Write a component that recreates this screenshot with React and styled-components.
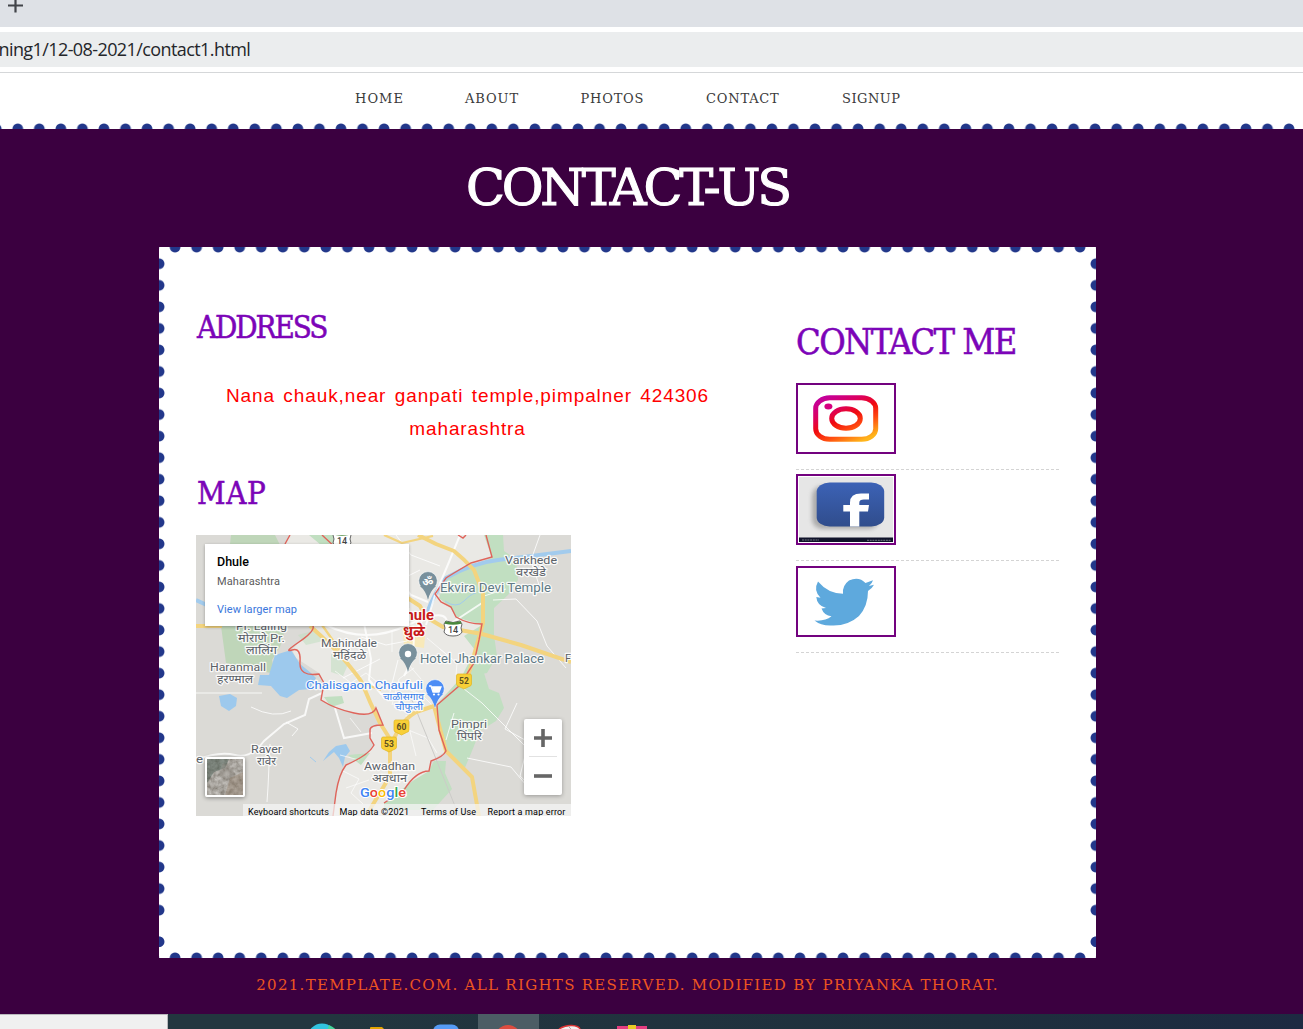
import React from 'react';
import styled, { createGlobalStyle } from 'styled-components';

const SLAB = `'DejaVu Serif', serif`;
const SLAB_NARROW = `'DejaVu Serif Condensed', 'DejaVu Serif', serif`;
const PLUM = '#3b0040';
const DOT = '#22378a';

const GlobalStyle = createGlobalStyle`
  * { box-sizing: border-box; }
  body { margin: 0; background: ${PLUM}; overflow: hidden; }
  h1, h2, p, ul { margin: 0; padding: 0; font-weight: 400; }
  ul { list-style: none; }
  a { color: inherit; text-decoration: none; }
  svg { display: block; }
`;

const Screen = styled.div`
  width: 1303px;
  height: 1029px;
  display: flex;
  flex-direction: column;
  overflow: hidden;
  background: ${PLUM};
`;

const TabStrip = styled.div`
  height: 27px;
  flex: none;
  padding-left: 8px;
  background: #dee1e6;
`;

const AddressRow = styled.div`
  height: 46px;
  flex: none;
  padding: 5px 0;
  background: #fff;
  border-bottom: 1px solid #d5d7d9;
`;

const AddressBar = styled.div`
  height: 35px;
  overflow: hidden;
  background: #ebedee;
  color: #24262a;
  font: 18px/35px 'Open Sans', sans-serif;
  letter-spacing: -0.59px;
  text-indent: -1.5px;
  white-space: nowrap;
`;

const Nav = styled.nav`
  height: 56px;
  flex: none;
  display: flex;
  flex-direction: column;
  justify-content: space-between;
  padding-top: 16px;
  background: #fff;
`;

const NavList = styled.ul`
  display: grid;
  grid-template-columns: 110px 115.5px 125.5px 136px auto;
  padding-left: 355px;
`;

const NavItem = styled.li`
  font: 13px/20px ${SLAB};
  letter-spacing: ${(p) => p.$spacing}px;
  color: #3a3a3a;
  white-space: nowrap;
`;

const DotRow = styled.div`
  height: 6px;
  background: radial-gradient(ellipse 5.8px 5.9px at 50% ${(p) => (p.$edge === 'top' ? '0' : '100%')}, ${DOT} 84%, transparent 100%)
    ${(p) => p.$offset}px 0 / 21.56px 6px repeat-x;
  grid-column: 1 / -1;
`;

const DotColumn = styled.div`
  padding-top: 0.3px;
  --dot: radial-gradient(ellipse 5.9px 5.8px at ${(p) => (p.$edge === 'left' ? '0' : '100%')} 50%, ${DOT} 84%, transparent 100%);

  &::before,
  &::after {
    content: '';
    display: block;
    background: var(--dot) 0 0 / 6px 21.56px repeat-y;
  }
  &::before { height: 668.4px; }
  &::after { height: 21.56px; margin-top: 9.2px; }
`;

const Banner = styled.header`
  height: 118px;
  flex: none;
  padding: 29px 48px 0 0;
`;

const Title = styled.h1`
  font: 51px/60px ${SLAB};
  letter-spacing: -3.2px;
  text-align: center;
  color: #fff;
  -webkit-text-stroke: 1.1px #fff;
`;

const Card = styled.main`
  width: 937px;
  height: 711px;
  flex: none;
  margin-left: 159px;
  display: grid;
  grid-template: 6px 1fr 6px / 6px 1fr 6px;
  background: #fff;
`;

const CardBody = styled.div`
  display: flex;
  justify-content: space-between;
  padding: 0 31px;
`;

const Primary = styled.section`
  width: 543px;
  padding-top: 54px;
`;

const Sidebar = styled.aside`
  width: 263px;
  padding-top: 67px;
`;

const Heading = styled.h2`
  font: ${(p) => (p.$large ? '36px/44px' : '31px/40px')} ${SLAB_NARROW};
  letter-spacing: ${(p) => p.$spacing}px;
  color: #7c04b8;
  -webkit-text-stroke: 0.5px #7c04b8;
  white-space: nowrap;
  text-indent: ${(p) => (p.$large ? 0 : 1)}px;
  margin-bottom: ${(p) => p.$gap}px;
`;

const Address = styled.p`
  margin-bottom: 28px;
  font: 19px/33px 'Liberation Sans', sans-serif;
  letter-spacing: 0.9px;
  word-spacing: 2.2px;
  text-align: center;
  color: #f00;
`;

const SocialItem = styled.li`
  padding-bottom: 15px;
  margin-bottom: 4.4px;
  border-bottom: 1px dashed #d4d4d4;
`;

const SocialLink = styled.a`
  display: block;
  width: 100px;
  height: 71px;
  padding: 1px;
  border: 2px solid #73027f;
`;

const MapFrame = styled.div`
  position: relative;
  width: 375px;
  height: 281px;
  overflow: hidden;
  font-family: Roboto, sans-serif;
`;

const PlaceCard = styled.div`
  position: absolute;
  left: 9px;
  top: 9px;
  width: 204px;
  height: 82px;
  padding: 9px 12px;
  background: #fff;
  box-shadow: 0 1px 3px rgba(0, 0, 0, 0.3);
`;

const PlaceName = styled.div`
  font-size: 12.5px;
  line-height: 18px;
  font-weight: 500;
  color: #000;
`;

const PlaceRegion = styled.div`
  margin-top: 1px;
  font-size: 11px;
  line-height: 20px;
  letter-spacing: 0.1px;
  color: #5b5b5b;
`;

const PlaceLink = styled.a`
  display: block;
  margin-top: 8px;
  font-size: 11px;
  line-height: 20px;
  letter-spacing: 0.07px;
  color: #3a77dc;
`;

const SatelliteToggle = styled.div`
  position: absolute;
  left: 9px;
  top: 222px;
  width: 40px;
  height: 40px;
  border: 2px solid #fff;
  border-radius: 2px;
  box-shadow: 0 1px 4px rgba(0, 0, 0, 0.4);
`;

const ZoomControl = styled.div`
  position: absolute;
  left: 328px;
  top: 184px;
  width: 38px;
  height: 76px;
  padding: 0 5px;
  background: #fff;
  border-radius: 2px;
  box-shadow: 0 1px 4px rgba(0, 0, 0, 0.3);
`;

const ZoomButton = styled.div`
  height: 37px;
  display: flex;
  align-items: center;
  justify-content: center;
  & + & {
    height: 39px;
    border-top: 1px solid #e2e2e2;
  }
`;

const Attribution = styled.div`
  position: absolute;
  right: 0;
  bottom: 0;
  width: 328px;
  height: 12px;
  display: flex;
  background: rgba(245, 245, 245, 0.72);
  font-size: 9px;
  line-height: 16px;
  letter-spacing: 0.16px;
  color: #000;
  white-space: nowrap;
`;

const Credit = styled.span`
  flex: none;
  width: ${(p) => p.$width}px;
  padding-left: 5px;
`;

const Footer = styled.footer`
  height: 56px;
  flex: none;
  padding: 16px 48px 0 0;
  font: 15px/22px ${SLAB};
  letter-spacing: 1.3px;
  text-align: center;
  color: #ed5520;
  white-space: nowrap;
`;

const Taskbar = styled.div`
  height: 15px;
  flex: none;
  display: flex;
  background: linear-gradient(90deg, #22363f 25%, #1e2f3d 75%, #1d2a42);
`;

const SearchBox = styled.div`
  width: 168px;
  margin-right: 123px;
  background: #f0f0f0;
  border: solid #b9b9bd;
  border-width: 1px 1px 0 0;
`;

const TaskSlot = styled.div`
  width: ${(p) => (p.$active ? 61 : 62)}px;
  margin-left: ${(p) => (p.$active ? 1 : 0)}px;
  height: 15px;
  overflow: hidden;
  background: ${(p) => (p.$active ? '#4c5d65' : 'none')};
`;

const NAV = [
  ['HOME', 1.05],
  ['ABOUT', 0.9],
  ['PHOTOS', 0.8],
  ['CONTACT', 0.8],
  ['SIGNUP', 0.5],
];

function Instagram() {
  return (
    <svg width="94" height="65" viewBox="0 0 94 65">
      <defs>
        <linearGradient id="ig" gradientUnits="userSpaceOnUse" x1="28" y1="9" x2="52" y2="60">
          <stop offset="0" stopColor="#c3009d" />
          <stop offset="0.28" stopColor="#dc0060" />
          <stop offset="0.5" stopColor="#f00a10" />
          <stop offset="0.72" stopColor="#ff4a10" />
          <stop offset="1" stopColor="#ffb51b" />
        </linearGradient>
      </defs>
      <g fill="none" stroke="url(#ig)">
        <rect x="16.7" y="11.8" width="60" height="41.5" rx="14" ry="10.5" strokeWidth="5" />
        <ellipse cx="47" cy="32.5" rx="14.3" ry="9.7" strokeWidth="5" />
      </g>
      <ellipse cx="29.4" cy="20.5" rx="4" ry="2.9" fill="#d60080" />
    </svg>
  );
}

function Facebook() {
  return (
    <svg width="94" height="65" viewBox="0 0 94 65">
      <defs>
        <linearGradient id="fb" x2="0" y2="1">
          <stop offset="0" stopColor="#3c62b6" />
          <stop offset="1" stopColor="#304d8c" />
        </linearGradient>
        <filter id="soft" x="-20%" y="-20%" width="140%" height="140%">
          <feGaussianBlur stdDeviation="2.2" />
        </filter>
      </defs>
      <rect width="94" height="65" fill="#e6e6e6" />
      <rect x="13" y="9" width="67" height="43" rx="10" fill="#8d8d8d" opacity=".65" filter="url(#soft)" />
      <rect x="17.7" y="5.5" width="67.5" height="44" rx="13" ry="9" fill="url(#fb)" />
      <path d="M51 49.5V34.5H44.3V28H51V25.5Q51 16.5 62 16.5H70V22.6H65Q60.3 22.6 60.3 25.8V28H70L69 34.5H60.3V49.5Z" fill="#fff" />
      <rect y="60.5" width="94" height="4.5" fill="#10132a" />
      <path d="M3 63H20M68 63.3H92" stroke="#737685" strokeWidth="1" strokeDasharray="2 .7" />
    </svg>
  );
}

function Twitter() {
  return (
    <svg width="94" height="65" viewBox="0 0 94 65">
      <path
        fill="#5ea9dd"
        d="M19 12.5Q29 24.5 44 24.8Q43 16.5 50 11.4Q60 7 66.5 14L74 11.2Q73 14.5 70 17L75 15.7Q73 19.5 69 22Q69 37 60 47Q49 57 33 56.5Q22 57 15.5 51.5Q26 52.5 32.5 47.3Q25 46.5 22.5 39.5L27 39Q18 36.5 17.3 28L21.5 28.7Q14 21.5 19 12.5Z"
      />
    </svg>
  );
}

function Label({ x, y, size = 11, fill = '#5b6168', weight = 400, width, children }) {
  return (
    <text
      x={x}
      y={y}
      fontSize={size}
      fontWeight={weight}
      fill={fill}
      stroke="#fff"
      strokeOpacity=".85"
      strokeWidth="2.4"
      paintOrder="stroke"
      strokeLinejoin="round"
      textLength={width}
      lengthAdjust="spacingAndGlyphs"
    >
      {children}
    </text>
  );
}

function Shield({ x, y, children }) {
  return (
    <g>
      <path d={`M${x - 6} ${y - 7}H${x + 6}Q${x + 7.5} ${y - 7} ${x + 7.5} ${y - 5}V${y + 3}Q${x + 7.5} ${y + 5} ${x + 5} ${y + 5.5}L${x} ${y + 8}L${x - 5} ${y + 5.5}Q${x - 7.5} ${y + 5} ${x - 7.5} ${y + 3}V${y - 5}Q${x - 7.5} ${y - 7} ${x - 6} ${y - 7}Z`} fill="#f8cf37" stroke="#e1b51f" strokeWidth=".7" />
      <text x={x} y={y + 3} fontSize="8.5" fontWeight="700" textAnchor="middle" fill="#5d5022">{children}</text>
    </g>
  );
}

function RoundShield({ x, y }) {
  return (
    <g>
      <path d={`M${x - 7} ${y - 7}Q${x} ${y - 4} ${x + 7} ${y - 7}L${x + 9} ${y - 4}Q${x + 7} ${y} ${x + 9} ${y + 4}Q${x + 7} ${y + 8} ${x} ${y + 8}Q${x - 7} ${y + 8} ${x - 9} ${y + 4}Q${x - 7} ${y} ${x - 9} ${y - 4}Z`} fill="#fff" stroke="#666" strokeWidth="1" />
      <path d={`M${x - 8} ${y - 5.5}Q${x} ${y - 3.5} ${x + 8} ${y - 5.5}`} stroke="#49883c" strokeWidth="2.4" fill="none" />
      <text x={x} y={y + 5} fontSize="9" fontWeight="500" textAnchor="middle" fill="#444">14</text>
    </g>
  );
}

function Pin({ x, y, fill, children }) {
  return (
    <g transform={`translate(${x} ${y})`}>
      <path d="M0 18C-1-2-3 9-7 5A9.3 9.3 0 1 1 7 5C3 9 1 12 0 18Z" fill={fill} stroke="#fff" strokeWidth=".6" />
      <path d="M-8 4Q-2 9 0 18Q2 9 8 4Z" fill={fill} />
      {children}
    </g>
  );
}

function CityMap() {
  return (
    <svg width="375" height="281" viewBox="0 0 375 281" fontFamily="Roboto, 'Noto Sans', 'Noto Sans Devanagari', sans-serif">
      <rect width="375" height="281" fill="#dbdad6" />
      <path d="M94 0L89 9 100 70 118 95 103 107 96 115 100 123 123 138 128 148 125 165 142 173 158 178 173 179 180 173 187 190 175 192 174 203 178 210 172 218 150 230 143 245 137 281H188V268L208 255 233 236 235 226 250 216 243 195 238 171 271 138 286 89 260 82 255 72 240 57 262 36 296 22 290 0Z" fill="#eae9e5" />
      <g fill="#c1dfc1">
        <path d="M243 63L252 40 275 31 296 23 288 0H307L308 16 320 24 322 45 312 60 298 73 298 100 301 121 291 138 265 143 279 115 268 101 286 90 260 82 254 72Z" />
        <path d="M269 138H288L293 154 303 158 308 173 300 186 284 196 276 216 268 235 251 217 240 171Z" />
        <path d="M250 226L238 226 233 236 218 245 188 268V275H237L256 254 249 238Z" />
        <path d="M113 0H145L139 14 125 10ZM128 162L146 161 148 168 135 172ZM152 220L174 218 165 230Z" />
      </g>
      <path d="M35 0H79L89 20 90 91 84 112 76 125 79 139 30 128 25 91Z" fill="#bfd6b9" />
      <path d="M135 119L153 127 147 141 135 137ZM102 100L120 95 127 106 110 110Z" fill="#c1dfc1" opacity=".55" />
      <path d="M206 91H230L228 113 208 110Z" fill="#f8e9b9" />
      <g fill="#9dc9ed">
        <path d="M79 120L95 115 104 129 115 138 120 143 114 154 103 155 91 163 84 161 75 151 62 150 64 140 73 140Z" />
        <path d="M23 161L34 159 41 163 40 171 33 176 25 171Z" />
        <path d="M127 226L133 217 140 211 150 209 154 216 149 222 147 232 143 223 138 217Z" />
      </g>
      <path d="M0 65Q18 73 40 85M231 78Q239 56 250 43Q276 28 302 25T375 16" fill="none" stroke="#a2cbed" strokeWidth="4" />
      <path d="M249 66Q260 74 268 66T280 58M120 227L114 222" fill="none" stroke="#a2cbed" strokeWidth="1" />
      <g fill="none" stroke="#fff" strokeOpacity=".8">
        <path d="M0 225Q23 216 39 220T68 206L88 189 109 180 113 164 126 158M139 173L148 203 176 198M230 90L239 60 253 27 264 0M168 88L175 124 173 145 186 160M231 77L218 100 217 124 208 141M204 46L215 60 232 67M130 90Q170 110 212 90T251 91L286 68" strokeWidth="2" />
        <path d="M74 209L72 252 71 267M55 172Q78 184 95 176M90 187L102 194 96 201M0 158H66M297 65L320 64 341 86 351 111 370 133M263 150L286 168 331 213 324 241 344 260M344 0L335 25 343 50M321 168L309 194 340 211M288 61L310 54M258 178L250 205M271 223L315 232 335 256M200 0L215 20 244 31M190 50L210 42 224 35M211 106L190 110 165 102M147 143L184 124M202 125L194 157" strokeWidth="1" />
        <path d="M139 136L155 148 170 138 181 147M154 183L165 197M196 96V117M218 133L203 144 196 170M244 114L261 128 260 140M231 103L256 124M209 109L213 130 225 144M200 190L232 203 241 218M210 180L220 221M147 236L163 244 155 258 167 269M150 253L173 245M144 220L163 225M205 151L226 160 237 171" strokeWidth=".8" />
      </g>
      <path d="M216 165L238 219 263 281" fill="none" stroke="#cccbc8" strokeWidth="1" />
      <g fill="none" stroke="#f3d47f" strokeLinejoin="round">
        <path d="M0 91H26M114 91Q137 111 151 128T166 148Q174 168 184 188L194 204 194 241 170 281M222 0L240 9 258 16Q268 24 278 35L287 58 287 88 271 145M204 58L224 71 230 82 247 92 286 99 325 110 375 127M194 216Q201 188 220 177L238 171M238 171L250 216 276 242 283 281" strokeWidth="4" />
        <path d="M188 0L206 8 237 1M126 90L148 121M166 148L185 155" strokeWidth="2.3" />
      </g>
      <g fill="none" stroke="#df645b" strokeWidth="1.4">
        <path d="M94 0L89 9M126 0L141 14 145 8M117 91Q119 96 103 107T96 115T104 127T123 139L128 148 125 165Q139 174 158 178T180 173L187 190Q174 190 174 195V203L178 210Q173 220 150 230Q143 239 140 258L137 281M290 0L296 22 275 28 258 38 250 43 239 59 245 67 255 72 260 82Q272 89 286 89L283 105 278 128 263 151 241 170 243 195 250 216Q247 222 235 226L233 236Q220 236 208 255L188 268M262 0L267 3 270 0" />
      </g>
      <RoundShield x={146} y={4} />
      <RoundShield x={257} y={93} />
      <Shield x={268} y={146}>52</Shield>
      <Shield x={205.5} y={192}>60</Shield>
      <Shield x={193} y={209}>53</Shield>

      <Label x={309} y={28.5} width={52}>Varkhede</Label>
      <Label x={320} y={41} width={30}>वरखेडे</Label>
      <Label x={244} y={56.5} size={12} fill="#607985" width={111}>Ekvira Devi Temple</Label>
      <Label x={200} y={84.5} size={14} fill="#c71919" weight={700} width={38}>Dhule</Label>
      <Label x={207} y={101} size={14.5} fill="#c71919" weight={700} width={22}>धुळे</Label>
      <Label x={40} y={95} size={10.5} width={51}>Pr. Laling</Label>
      <Label x={42} y={107} width={47}>मोराणे Pr.</Label>
      <Label x={50} y={119} width={31}>लालिंग</Label>
      <Label x={125} y={112} width={56}>Mahindale</Label>
      <Label x={137} y={124} width={33}>महिंदळे</Label>
      <Label x={14} y={136} width={56}>Haranmall</Label>
      <Label x={21} y={148} width={36}>हरण्माल</Label>
      <Label x={224} y={128} size={12} fill="#607985" width={124}>Hotel Jhankar Palace</Label>
      <Label x={369} y={127}>F</Label>
      <Label x={110} y={153.5} size={11.5} fill="#377ee9" width={117}>Chalisgaon Chaufuli</Label>
      <Label x={187} y={164.5} size={9} fill="#377ee9" width={41}>चाळीसगाव</Label>
      <Label x={199} y={175} size={9} fill="#377ee9" width={28}>चौफुली</Label>
      <Label x={255} y={193} width={36}>Pimpri</Label>
      <Label x={261} y={205} width={25}>पिंपरि</Label>
      <Label x={55} y={218} width={31}>Raver</Label>
      <Label x={61} y={230} width={19}>रावेर</Label>
      <Label x={0} y={228} width={7}>e</Label>
      <Label x={168} y={235} width={51}>Awadhan</Label>
      <Label x={176} y={247} width={35}>अवधान</Label>

      <Pin x={232} y={47} fill="#78909c">
        <text x="0" y="4" fontSize="11" fontWeight="700" textAnchor="middle" fill="#fff">ॐ</text>
      </Pin>
      <Pin x={212} y={119} fill="#78909c"><circle r="3.2" fill="#fff" /></Pin>
      <Pin x={239} y={155} fill="#4d8df5">
        <path d="M-6-4H-4L-2 2H4L6-3H-3" fill="none" stroke="#fff" strokeWidth="1.3" />
        <path d="M-3-3H6L4 2H-2Z" fill="#fff" />
        <circle cx="-1" cy="4.5" r="1.1" fill="#fff" />
        <circle cx="3.5" cy="4.5" r="1.1" fill="#fff" />
      </Pin>
      <text x="164" y="262" fontSize="13.5" fontWeight="500" stroke="#fff" strokeWidth="2" paintOrder="stroke" textLength="46" lengthAdjust="spacingAndGlyphs">
        <tspan fill="#4285f4">G</tspan><tspan fill="#ea4335">o</tspan><tspan fill="#fbbc05">o</tspan><tspan fill="#4285f4">g</tspan><tspan fill="#34a853">l</tspan><tspan fill="#ea4335">e</tspan>
      </text>
    </svg>
  );
}

function SatelliteThumb() {
  return (
    <svg width="36" height="36" viewBox="0 0 36 36">
      <defs>
        <filter id="terrain" x="0" y="0" width="100%" height="100%">
          <feTurbulence type="fractalNoise" baseFrequency="0.22" numOctaves="3" seed="4" />
          <feColorMatrix values="0.5 0 0 0 0.15  0.5 0 0 0 0.13  0.5 0 0 0 0.1  0 0 0 0 1" />
        </filter>
      </defs>
      <rect width="36" height="36" filter="url(#terrain)" />
      <path d="M0 0H22L18 9 7 13 0 24Z" fill="#3f5549" opacity=".45" />
      <path d="M16 4L25 9 28 19 19 21 12 15Z" fill="#918d84" opacity=".4" />
      <path d="M23 19L36 13V36H18Z" fill="#8a735c" opacity=".35" />
    </svg>
  );
}

export default function App() {
  return (
    <Screen>
      <GlobalStyle />
      <TabStrip>
        <svg width="15" height="13"><path d="M0 5.5H15M7.5 0V12.5" stroke="#414449" strokeWidth="2.2" /></svg>
      </TabStrip>
      <AddressRow><AddressBar>ning1/12-08-2021/contact1.html</AddressBar></AddressRow>
      <Nav>
        <NavList>
          {NAV.map(([name, spacing]) => (
            <NavItem key={name} $spacing={spacing}><a href="#">{name}</a></NavItem>
          ))}
        </NavList>
        <DotRow $edge="bottom" $offset={7} />
      </Nav>
      <Banner><Title>CONTACT-US</Title></Banner>
      <Card>
        <DotRow $edge="top" $offset={5.3} />
        <DotColumn $edge="left" />
        <CardBody>
          <Primary>
            <Heading $spacing={-2.1} $gap={32}>ADDRESS</Heading>
            <Address>Nana chauk,near ganpati temple,pimpalner 424306 maharashtra</Address>
            <Heading $spacing={0.7} $gap={22}>MAP</Heading>
            <MapFrame>
              <CityMap />
              <PlaceCard>
                <PlaceName>Dhule</PlaceName>
                <PlaceRegion>Maharashtra</PlaceRegion>
                <PlaceLink href="#">View larger map</PlaceLink>
              </PlaceCard>
              <SatelliteToggle><SatelliteThumb /></SatelliteToggle>
              <ZoomControl>
                <ZoomButton><svg width="18" height="18"><path d="M0 9H18M9 0V18" stroke="#666" strokeWidth="3.6" /></svg></ZoomButton>
                <ZoomButton><svg width="18" height="18"><path d="M0 9H18" stroke="#666" strokeWidth="3.6" /></svg></ZoomButton>
              </ZoomControl>
              <Attribution>
                <Credit $width={91.5}>Keyboard shortcuts</Credit>
                <Credit $width={81.5}>Map data ©2021</Credit>
                <Credit $width={66.5}>Terms of Use</Credit>
                <Credit $width={88}>Report a map error</Credit>
              </Attribution>
            </MapFrame>
          </Primary>
          <Sidebar>
            <Heading $large $spacing={-1.65} $gap={19}>CONTACT ME</Heading>
            <ul>
              <SocialItem><SocialLink href="#"><Instagram /></SocialLink></SocialItem>
              <SocialItem><SocialLink href="#"><Facebook /></SocialLink></SocialItem>
              <SocialItem><SocialLink href="#"><Twitter /></SocialLink></SocialItem>
            </ul>
          </Sidebar>
        </CardBody>
        <DotColumn $edge="right" />
        <DotRow $edge="bottom" $offset={5.3} />
      </Card>
      <Footer>2021.TEMPLATE.COM. ALL RIGHTS RESERVED. MODIFIED BY PRIYANKA THORAT.</Footer>
      <Taskbar>
        <SearchBox />
        <TaskSlot><svg width="62" height="15"><circle cx="31" cy="24" r="14.5" fill="#31c3df" /><path d="M38 11Q45 14 46 18H36Z" fill="#43d69b" /></svg></TaskSlot>
        <TaskSlot><svg width="62" height="15"><path d="M17 15V14Q17 13 18 13H29L31 15Z" fill="#e3a400" /></svg></TaskSlot>
        <TaskSlot><svg width="62" height="15"><rect x="18" y="10.5" width="26" height="24" rx="7" fill="#559bf5" /></svg></TaskSlot>
        <TaskSlot $active><svg width="61" height="15"><circle cx="30" cy="24" r="13" fill="#dd4c3f" /></svg></TaskSlot>
        <TaskSlot><svg width="62" height="15"><path d="M20 15Q26 11 33 11.5T41 15" fill="#f5eeee" stroke="#dc3535" strokeWidth="1.5" /><path d="M29 12L32 15" stroke="#aaa" /></svg></TaskSlot>
        <TaskSlot><svg width="62" height="15"><path d="M16 12H46V15H16Z" fill="#e43c80" /><path d="M27 11H35V15H27Z" fill="#e8ca25" /></svg></TaskSlot>
      </Taskbar>
    </Screen>
  );
}
